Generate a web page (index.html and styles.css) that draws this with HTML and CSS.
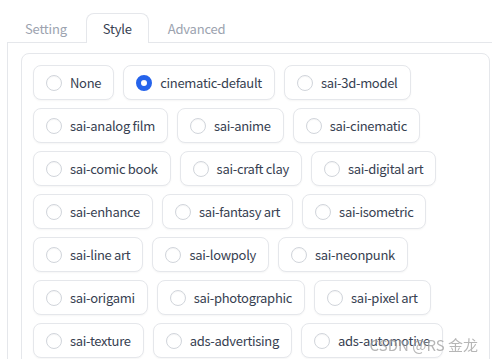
FILE: index.html
```html
<!DOCTYPE html>
<html lang="en">
<head>
    <meta charset="UTF-8">
    <meta name="viewport" content="width=device-width, initial-scale=1.0">
    <title>Style</title>
    <link rel="stylesheet" href="styles.css">
</head>
<body>

    <div class="tabs">
        <div class="tab-nav">
            <button class="tab">Setting</button>
            <button class="tab selected">Style</button>
            <button class="tab">Advanced</button>
        </div>

        <div class="tab-panel">
            <div class="block">
                <div class="radio-group">
                    <label class="option"><input type="radio" name="style"><span>None</span></label>
                    <label class="option"><input type="radio" name="style" checked><span>cinematic-default</span></label>
                    <label class="option"><input type="radio" name="style"><span>sai-3d-model</span></label>
                    <label class="option"><input type="radio" name="style"><span>sai-analog film</span></label>
                    <label class="option"><input type="radio" name="style"><span>sai-anime</span></label>
                    <label class="option"><input type="radio" name="style"><span>sai-cinematic</span></label>
                    <label class="option"><input type="radio" name="style"><span>sai-comic book</span></label>
                    <label class="option"><input type="radio" name="style"><span>sai-craft clay</span></label>
                    <label class="option"><input type="radio" name="style"><span>sai-digital art</span></label>
                    <label class="option"><input type="radio" name="style"><span>sai-enhance</span></label>
                    <label class="option"><input type="radio" name="style"><span>sai-fantasy art</span></label>
                    <label class="option"><input type="radio" name="style"><span>sai-isometric</span></label>
                    <label class="option"><input type="radio" name="style"><span>sai-line art</span></label>
                    <label class="option"><input type="radio" name="style"><span>sai-lowpoly</span></label>
                    <label class="option"><input type="radio" name="style"><span>sai-neonpunk</span></label>
                    <label class="option"><input type="radio" name="style"><span>sai-origami</span></label>
                    <label class="option"><input type="radio" name="style"><span>sai-photographic</span></label>
                    <label class="option"><input type="radio" name="style"><span>sai-pixel art</span></label>
                    <label class="option"><input type="radio" name="style"><span>sai-texture</span></label>
                    <label class="option"><input type="radio" name="style"><span>ads-advertising</span></label>
                    <label class="option"><input type="radio" name="style"><span>ads-automotive</span></label>
                </div>
            </div>
        </div>
    </div>

    <!-- marca d'agua do print -->
    <div class="watermark">CSDN @RS 金龙</div>

</body>
</html>
```

FILE: styles.css
```css
* {
    margin: 0;
    padding: 0;
    box-sizing: border-box;
}

html {
    overflow: hidden;
}

body {
    font-family: "Noto Sans CJK SC", "Noto Sans", sans-serif;
    font-size: 13px;
    letter-spacing: -0.3px;
    color: #374151;
    background: #fff;
    padding: 13px 0 0 7px;
    width: 503px;
}

.tab-nav {
    display: flex;
    gap: 2px;
    padding-left: 1px;
    border-bottom: 1px solid #e5e7eb;
}

.tab {
    font-family: inherit;
    font-size: 13px;
    letter-spacing: -0.2px;
    height: 30px;
    padding: 0 16px;
    margin-bottom: -1px;
    background: none;
    color: #9ca3af;
    border: 1px solid transparent;
    border-bottom: none;
    border-radius: 8px 8px 0 0;
    cursor: pointer;
}

.tab.selected {
    color: #374151;
    background: #fff;
    border-color: #e5e7eb;
}

.tab-panel {
    border-left: 1px solid #e5e7eb;
    padding: 10px 13px 0 13px;
}

.block {
    border: 1px solid #e5e7eb;
    border-radius: 8px;
    padding: 11px;
    height: 400px;
}

.radio-group {
    display: flex;
    flex-wrap: wrap;
    gap: 8px 9px;
}

.option {
    display: flex;
    align-items: center;
    gap: 8px;
    height: 35px;
    padding: 0 12px;
    border: 1px solid #e5e7eb;
    border-radius: 8px;
    background: #fff;
    box-shadow: 0 1px 2px rgba(0, 0, 0, 0.04);
    cursor: pointer;
}

.option input {
    appearance: none;
    width: 16px;
    height: 16px;
    border: 1px solid #d1d5db;
    border-radius: 50%;
    background: #fff;
    box-shadow: inset 0 1px 1px rgba(0, 0, 0, 0.04);
}

.option input:checked {
    border: 5px solid #2563eb;
    background: #fff;
}

.watermark {
    position: fixed;
    right: 14px;
    bottom: 4px;
    font-size: 15px;
    letter-spacing: 0;
    color: rgba(110, 110, 110, 0.5);
    text-shadow: 0 0 2px rgba(255, 255, 255, 0.8);
}
```
